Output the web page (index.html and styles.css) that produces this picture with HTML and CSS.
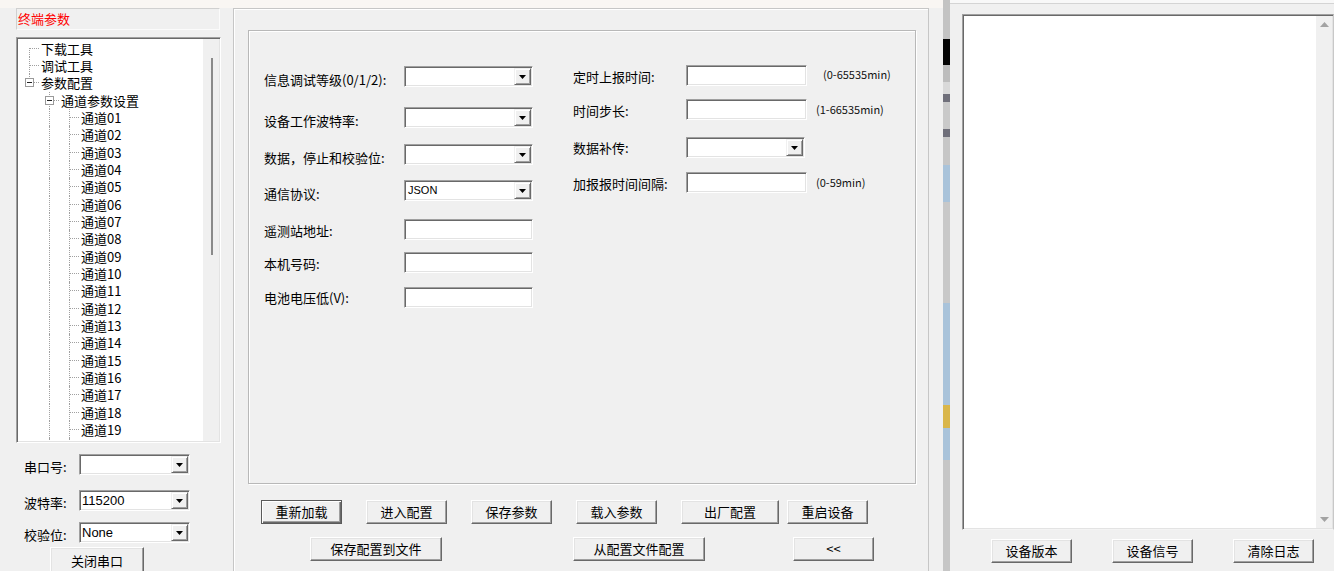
FILE: index.html
```html
<!DOCTYPE html>
<html lang="zh-CN">
<head>
<meta charset="utf-8">
<title>终端参数</title>
<link rel="stylesheet" href="styles.css">
</head>
<body>
<div class="app">
  <aside class="left">
    <div class="title">终端参数</div>
    <div class="tree">
      <div class="tree-list">
        <div class="node"><i class="g vb h"></i><span class="t">下载工具</span></div>
        <div class="node"><i class="g v h"></i><span class="t">调试工具</span></div>
        <div class="node"><i class="g vt h"><b class="box"></b></i><span class="t">参数配置</span></div>
        <div class="node"><i class="g"></i><i class="g v h"><b class="box"></b></i><span class="t">通道参数设置</span></div>
        <div class="node"><i class="g"></i><i class="g v"></i><i class="g v h"></i><span class="t">通道01</span></div>
        <div class="node"><i class="g"></i><i class="g v"></i><i class="g v h"></i><span class="t">通道02</span></div>
        <div class="node"><i class="g"></i><i class="g v"></i><i class="g v h"></i><span class="t">通道03</span></div>
        <div class="node"><i class="g"></i><i class="g v"></i><i class="g v h"></i><span class="t">通道04</span></div>
        <div class="node"><i class="g"></i><i class="g v"></i><i class="g v h"></i><span class="t">通道05</span></div>
        <div class="node"><i class="g"></i><i class="g v"></i><i class="g v h"></i><span class="t">通道06</span></div>
        <div class="node"><i class="g"></i><i class="g v"></i><i class="g v h"></i><span class="t">通道07</span></div>
        <div class="node"><i class="g"></i><i class="g v"></i><i class="g v h"></i><span class="t">通道08</span></div>
        <div class="node"><i class="g"></i><i class="g v"></i><i class="g v h"></i><span class="t">通道09</span></div>
        <div class="node"><i class="g"></i><i class="g v"></i><i class="g v h"></i><span class="t">通道10</span></div>
        <div class="node"><i class="g"></i><i class="g v"></i><i class="g v h"></i><span class="t">通道11</span></div>
        <div class="node"><i class="g"></i><i class="g v"></i><i class="g v h"></i><span class="t">通道12</span></div>
        <div class="node"><i class="g"></i><i class="g v"></i><i class="g v h"></i><span class="t">通道13</span></div>
        <div class="node"><i class="g"></i><i class="g v"></i><i class="g v h"></i><span class="t">通道14</span></div>
        <div class="node"><i class="g"></i><i class="g v"></i><i class="g v h"></i><span class="t">通道15</span></div>
        <div class="node"><i class="g"></i><i class="g v"></i><i class="g v h"></i><span class="t">通道16</span></div>
        <div class="node"><i class="g"></i><i class="g v"></i><i class="g v h"></i><span class="t">通道17</span></div>
        <div class="node"><i class="g"></i><i class="g v"></i><i class="g v h"></i><span class="t">通道18</span></div>
        <div class="node"><i class="g"></i><i class="g v"></i><i class="g v h"></i><span class="t">通道19</span></div>
        <div class="node"><i class="g"></i><i class="g v"></i><i class="g v h"></i><span class="t">通道20</span></div>
      </div>
      <div class="tree-scroll"><div class="thumb"></div></div>
    </div>
    <div class="port">
      <div class="prow"><label class="plbl">串口号:</label><div class="combo pcombo"><span class="val"></span><span class="drop"><svg width="7" height="4" viewBox="0 0 7 4"><path d="M0 0H7L3.5 4Z"/></svg></span></div></div>
      <div class="prow"><label class="plbl">波特率:</label><div class="combo pcombo"><span class="val big">115200</span><span class="drop"><svg width="7" height="4" viewBox="0 0 7 4"><path d="M0 0H7L3.5 4Z"/></svg></span></div></div>
      <div class="prow"><label class="plbl">校验位:</label><div class="combo pcombo"><span class="val big">None</span><span class="drop"><svg width="7" height="4" viewBox="0 0 7 4"><path d="M0 0H7L3.5 4Z"/></svg></span></div></div>
      <div class="prow"><button class="btn close">关闭串口</button></div>
    </div>
  </aside>

  <main class="middle">
    <section class="group">
      <div class="form-l">
        <span class="lbl sel">信息调试等级(0/1/2):</span>
        <div class="combo"><span class="val"></span><span class="drop"><svg width="7" height="4" viewBox="0 0 7 4"><path d="M0 0H7L3.5 4Z"/></svg></span></div>
        <span class="lbl sel">设备工作波特率:</span>
        <div class="combo"><span class="val"></span><span class="drop"><svg width="7" height="4" viewBox="0 0 7 4"><path d="M0 0H7L3.5 4Z"/></svg></span></div>
        <span class="lbl sel">数据，停止和校验位:</span>
        <div class="combo"><span class="val"></span><span class="drop"><svg width="7" height="4" viewBox="0 0 7 4"><path d="M0 0H7L3.5 4Z"/></svg></span></div>
        <span class="lbl sel">通信协议:</span>
        <div class="combo"><span class="val">JSON</span><span class="drop"><svg width="7" height="4" viewBox="0 0 7 4"><path d="M0 0H7L3.5 4Z"/></svg></span></div>
        <span class="lbl inp">遥测站地址:</span>
        <div class="input"></div>
        <span class="lbl inp">本机号码:</span>
        <div class="input"></div>
        <span class="lbl">电池电压低(V):</span>
        <div class="input"></div>
      </div>
      <div class="form-r">
        <span class="lbl inp">定时上报时间:</span>
        <div class="input"></div>
        <span class="hint first">(0-65535min)</span>
        <span class="lbl inp">时间步长:</span>
        <div class="input"></div>
        <span class="hint">(1-66535min)</span>
        <span class="lbl">数据补传:</span>
        <div class="combo rcombo"><span class="val"></span><span class="drop"><svg width="7" height="4" viewBox="0 0 7 4"><path d="M0 0H7L3.5 4Z"/></svg></span></div>
        <span></span>
        <span class="lbl inp">加报报时间间隔:</span>
        <div class="input"></div>
        <span class="hint">(0-59min)</span>
      </div>
    </section>
    <div class="btn-row r1">
      <button class="btn default">重新加载</button>
      <button class="btn">进入配置</button>
      <button class="btn">保存参数</button>
      <button class="btn">载入参数</button>
      <div class="pair">
        <button class="btn wide">出厂配置</button>
        <button class="btn">重启设备</button>
      </div>
    </div>
    <div class="btn-row r2">
      <button class="btn long">保存配置到文件</button>
      <button class="btn long m1">从配置文件配置</button>
      <button class="btn m2">&lt;&lt;</button>
    </div>
  </main>

  <div class="strip">
    <i class="s s1"></i><i class="s s2"></i><i class="s s3"></i><i class="s s4"></i>
    <i class="s s5"></i><i class="s s6"></i><i class="s s5"></i><i class="s s7"></i>
    <i class="s s8"></i><i class="s s9"></i><i class="s s10"></i><i class="s s11"></i>
    <i class="s s12"></i><i class="s s13"></i>
  </div>

  <section class="right">
    <div class="right-head"></div>
    <div class="log">
      <div class="log-area"></div>
      <div class="log-scroll">
        <svg width="9" height="5" viewBox="0 0 9 5"><path d="M0 5L4.5 0L9 5Z"/></svg>
        <svg width="9" height="5" viewBox="0 0 9 5"><path d="M0 0H9L4.5 5Z"/></svg>
      </div>
    </div>
    <div class="log-btns">
      <button class="btn">设备版本</button>
      <button class="btn">设备信号</button>
      <button class="btn">清除日志</button>
    </div>
  </section>
</div>
</body>
</html>
```

FILE: styles.css
```css
* { box-sizing: border-box; margin: 0; padding: 0; }

html, body { width: 1334px; height: 571px; overflow: hidden; }

body {
  font-family: "Noto Sans CJK SC", "Noto Sans", sans-serif;
  font-size: 13px;
  color: #000;
  background: linear-gradient(#f9f6f3 0, #f9f6f3 8px, #f0f0f0 8px);
}

.app { display: flex; height: 571px; }

/* ---------- left panel ---------- */
.left { width: 233px; flex: none; display: flex; flex-direction: column; }

.title {
  margin: 8px 0 0 16px;
  width: 204px;
  height: 22px;
  border: 1px solid;
  border-color: #d0d0d0 #fbfbfb #fbfbfb #d0d0d0;
  background: #f0f0f0;
  color: #ff0000;
  line-height: 20px;
  padding-left: 1px;
}

.tree {
  margin: 7px 0 0 16px;
  width: 205px;
  height: 406px;
  display: flex;
  background: #fff;
  border: 1px solid;
  border-color: #a0a0a0 #fff #fff #a0a0a0;
  box-shadow: inset 1px 1px 0 #696969, inset -1px -1px 0 #e3e3e3;
  padding: 1px;
}

.tree-list { flex: 1; overflow: hidden; padding: 1px 0 0 1px; }

.tree-scroll { width: 16px; flex: none; background: #f0f0f0; padding: 19px 0 0 8px; }
.thumb { width: 2px; height: 197px; background: #8a8a8a; }

.node { display: flex; height: 17px; line-height: 17px; white-space: nowrap; }
.node:nth-child(3n) { height: 18px; line-height: 18px; }
.t { padding-left: 2px; }

.g { width: 20px; flex: none; position: relative; }
.g.v::before, .g.vt::before, .g.vb::before {
  content: "";
  position: absolute;
  left: 10px;
  top: 0;
  bottom: 0;
  border-left: 1px dotted #a0a0a0;
}
.g.vt::before { bottom: auto; height: 9px; }
.g.vb::before { top: 8px; }
.g.h::after {
  content: "";
  position: absolute;
  left: 11px;
  right: 0;
  top: 8px;
  border-top: 1px dotted #a0a0a0;
}
.box {
  position: absolute;
  left: 6px;
  top: 4px;
  width: 9px;
  height: 9px;
  border: 1px solid #9a9a9a;
  background: #fff;
  z-index: 1;
}
.box::after {
  content: "";
  position: absolute;
  left: 1px;
  top: 3px;
  width: 5px;
  height: 1px;
  background: #222;
}

.port {
  margin-top: 11px;
  display: grid;
  grid-template-rows: 36px 32px 25px auto;
}
.prow { display: flex; align-items: flex-start; }
.plbl { width: 79px; padding: 3px 0 0 24px; line-height: 19px; white-space: nowrap; }
.pcombo { width: 111px; height: 22px; }
.btn.close { margin-left: 50px; width: 94px; height: 28px; line-height: 26px; padding-bottom: 2px; }

/* ---------- common controls ---------- */
.combo, .input {
  height: 21px;
  background: #fff;
  border: 1px solid;
  border-color: #a0a0a0 #fff #fff #a0a0a0;
  box-shadow: inset 1px 1px 0 #696969, inset -1px -1px 0 #e3e3e3;
  padding: 1px;
}
.combo { display: flex; }
.combo .val {
  flex: 1;
  padding-left: 2px;
  font-family: "Liberation Sans", sans-serif;
  font-size: 11px;
  line-height: 17px;
  white-space: nowrap;
  overflow: hidden;
}
.combo .val.big { font-size: 13px; line-height: 18px; padding-left: 1px; }
.combo .drop {
  width: 17px;
  flex: none;
  display: flex;
  align-items: center;
  justify-content: center;
  background: #f0f0f0;
  border: 1px solid;
  border-color: #f0f0f0 #696969 #696969 #f0f0f0;
  box-shadow: inset 1px 1px 0 #fff, inset -1px -1px 0 #a0a0a0;
}
.combo .drop svg { fill: #000; }

.btn {
  font: inherit;
  color: #000;
  width: 81px;
  height: 24px;
  line-height: 20px;
  padding: 0;
  background: #f0f0f0;
  border: 1px solid;
  border-color: #fff #696969 #696969 #fff;
  box-shadow: inset -1px -1px 0 #a0a0a0, inset 1px 1px 0 #e3e3e3;
  flex: none;
}
.btn.default {
  border-color: #5a5a5a;
  box-shadow: inset 1px 1px 0 #fff, inset -1px -1px 0 #696969, inset -2px -2px 0 #a0a0a0;
}

/* ---------- middle panel ---------- */
.middle {
  width: 696px;
  height: 563px;
  flex: none;
  margin-top: 8px;
  border: 1px solid #c6c6c6;
  border-bottom: none;
  box-shadow: inset 1px 1px 0 #fff;
  padding: 21px 12px 0 14px;
}

.group {
  width: 668px;
  height: 454px;
  border: 1px solid #b8b8b8;
  box-shadow: inset 1px 1px 0 #fff, 1px 1px 0 #fff;
  padding: 35px 0 0 15px;
  display: flex;
  align-items: flex-start;
  gap: 40px;
}

.form-l {
  display: grid;
  grid-template-columns: 140px 129px;
  grid-template-rows: 41px 37px 36px 39px 33px 35px 21px;
  align-items: start;
}
.form-r {
  margin-top: -1px;
  display: grid;
  grid-template-columns: 113px 121px auto;
  grid-template-rows: 34px 38px 35px 21px;
  align-items: start;
}
.lbl { line-height: 21px; white-space: nowrap; }
.lbl.sel { padding-top: 3px; }
.lbl.inp { padding-top: 1px; }
.rcombo { width: 119px; }

.hint {
  font-size: 11px;
  line-height: 21px;
  padding-left: 9px;
  white-space: nowrap;
  color: #111;
}
.hint.first { padding-left: 16px; line-height: 19px; }

.btn-row { display: flex; }
.r1 { margin: 16px 0 0 13px; gap: 24px; }
.pair { display: flex; gap: 8px; }
.btn.wide { width: 98px; }
.r2 { margin: 13px 0 0 62px; }
.btn.long { width: 132px; }
.m1 { margin-left: 131px; }
.m2 { margin-left: 88px; }

/* ---------- background strip ---------- */
.strip { width: 7px; flex: none; margin-left: 14px; display: flex; flex-direction: column; }
.s { display: block; flex: none; }
.s1 { height: 39px; background: #c3c3c3; }
.s2 { height: 26px; background: #050505; }
.s3 { height: 17px; background: #bdbdbd; }
.s4 { height: 12px; background: #d9d9d9; }
.s5 { height: 8px; background: #6f6f7a; }
.s6 { height: 27px; background: #c9c9c9; }
.s7 { height: 28px; background: #c6c6c6; }
.s8 { height: 37px; background: #a9c3da; }
.s9 { height: 101px; background: #c8c8c8; }
.s10 { height: 102px; background: #a9c3da; }
.s11 { height: 23px; background: #d9b64a; }
.s12 { height: 32px; background: #a9c3da; }
.s13 { height: 111px; background: #c6c6c6; }

/* ---------- right panel ---------- */
.right { width: 384px; flex: none; display: flex; flex-direction: column; background: #f0f0f0; }
.right-head { height: 4px; background: #f8f8f8; border-bottom: 1px solid #d4d4d4; }

.log {
  margin: 10px 0 0 12px;
  width: 372px;
  height: 516px;
  display: flex;
  border: 1px solid;
  border-color: #a0a0a0 #c8c8c8 #f4f4f4 #a0a0a0;
  box-shadow: inset 1px 1px 0 #696969, inset -1px -1px 0 #e3e3e3;
  padding: 1px;
}
.log-area { flex: 1; background: #fff; }
.log-scroll {
  width: 16px;
  flex: none;
  background: #f0f0f0;
  display: flex;
  flex-direction: column;
  justify-content: space-between;
  align-items: center;
  padding: 6px 0 6px;
}
.log-scroll svg { fill: #a3a3a3; }

.log-btns { display: flex; gap: 40px; margin: 9px 0 0 41px; }
```
